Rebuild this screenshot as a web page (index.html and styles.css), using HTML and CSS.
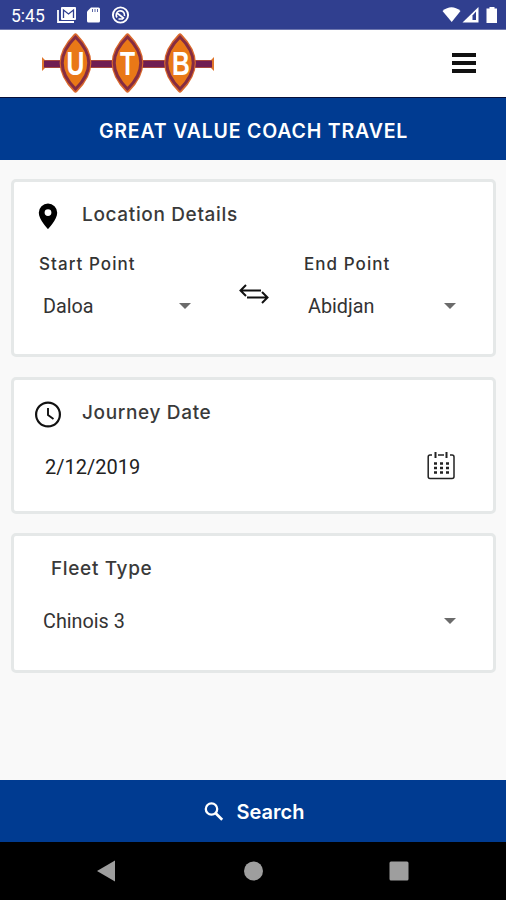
FILE: index.html
```html
<!DOCTYPE html>
<html lang="en">
<head>
    <meta charset="UTF-8">
    <meta name="viewport" content="width=device-width, initial-scale=1.0">
    <title>UTB - Great Value Coach Travel</title>
    <link rel="stylesheet" href="styles.css">
</head>
<body>
    <div class="screen">
        <div class="status-bar">
            <span class="time">5:45</span>
            <svg class="status-left" width="74" height="18" viewBox="0 0 74 18">
                <path d="M1 4v12h16" fill="none" stroke="#fff" stroke-width="1.8"/>
                <rect x="4" y="1" width="15" height="13" rx="1" fill="#fff"/>
                <path d="M6.500 12V4l5 4 5-4v8" fill="none" stroke="#303f8f" stroke-width="1.3"/>
                <path d="M34 1.500h7.500q1.500 0 1.500 1.500v12q0 1.500-1.500 1.500h-10q-1.500 0-1.500-1.500V5.500z" fill="#fff"/>
                <path d="M35.500 3v3M38 3v3M40.500 3v3" stroke="#303f8f" stroke-width="0.8"/>
                <circle cx="63.500" cy="9" r="7.600" fill="none" stroke="#fff" stroke-width="1.900"/>
                <path d="M60 11.500a4.300 4.300 0 0 1 2-6.500 4.300 4.300 0 0 1 5.500 5M60 7l7 5.500M61.500 13h4.500" fill="none" stroke="#fff" stroke-width="1.700"/>
            </svg>
            <svg class="status-right" width="56" height="18" viewBox="0 0 56 18">
                <path d="M0.500 5Q9.500-2.500 18.500 5L9.700 16z" fill="#fff"/>
                <path d="M20.500 16.500L36.500 1v15.500z" fill="#fff"/>
                <path d="M30.500 14V9.500l3.500-4V14z" fill="#303f8f"/>
                <path d="M45.500 2.500h2V1h5v1.500h2.500V17H44.500V2.500z" fill="#fff"/>
            </svg>
        </div>

        <div class="header">
            <svg class="logo" width="174" height="62" viewBox="0 0 174 62">
                <path d="M1 25l3 3h166l3-3v14l-3-3H4l-3 3z" fill="#e0752a"/>
                <path d="M3 28.500h168v7H3z" fill="#701d52"/>
                <g fill="#e97817" stroke="#d9682c" stroke-width="5" stroke-linejoin="round">
                    <path d="M34.500 4Q8 31 34.500 58Q61 31 34.500 4z"/>
                    <path d="M86.500 4Q60 31 86.500 58Q113 31 86.500 4z"/>
                    <path d="M139 4Q112.500 31 139 58Q165.500 31 139 4z"/>
                </g>
                <g fill="#e97817" stroke="#852c42" stroke-width="3">
                    <path d="M34.500 5Q8 31 34.500 57Q61 31 34.500 5z"/>
                    <path d="M86.500 5Q60 31 86.500 57Q113 31 86.500 5z"/>
                    <path d="M139 5Q112.500 31 139 57Q165.500 31 139 5z"/>
                </g>
                <g class="logo-text">
                    <text x="34.500" y="43">U</text>
                    <text x="86.500" y="43">T</text>
                    <text x="140" y="43">B</text>
                </g>
            </svg>
            <div class="menu">
                <span></span>
                <span></span>
                <span></span>
            </div>
        </div>

        <div class="title">GREAT VALUE COACH TRAVEL</div>

        <div class="content">
            <div class="card card-location">
                <div class="card-head">
                    <svg width="28" height="28" viewBox="0 0 28 28">
                        <path fill-rule="evenodd" d="M14 2.500a9.200 9.200 0 0 0-9.200 9.200C4.800 18.500 14 28 14 28s9.200-9.500 9.200-16.300A9.200 9.200 0 0 0 14 2.500zm0 5.700a3.400 3.400 0 1 1 0 6.800 3.400 3.400 0 0 1 0-6.800z"/>
                    </svg>
                    <h2>Location Details</h2>
                </div>
                <div class="points">
                    <div class="point">
                        <div class="label">Start Point</div>
                        <div class="select"><span>Daloa</span><i class="caret"></i></div>
                    </div>
                    <svg class="swap" width="30" height="20" viewBox="0 0 30 20" fill="none" stroke="#111" stroke-width="2">
                        <path d="M7 1L1.500 6.500 7 12M2 6.500h20"/>
                        <path d="M23 8l5.500 5.500L23 19M28 13.500H8"/>
                    </svg>
                    <div class="point">
                        <div class="label">End Point</div>
                        <div class="select"><span>Abidjan</span><i class="caret"></i></div>
                    </div>
                </div>
            </div>

            <div class="card card-date">
                <div class="card-head">
                    <svg width="28" height="28" viewBox="0 0 28 28" fill="none" stroke="#111">
                        <circle cx="14" cy="14.500" r="11.900" stroke-width="2.200"/>
                        <path d="M14 8v7l5.500 4" stroke-width="1.900"/>
                    </svg>
                    <h2>Journey Date</h2>
                </div>
                <div class="date-row">
                    <span class="date">2/12/2019</span>
                    <svg width="28" height="29" viewBox="0 0 28 29" fill="none" stroke="#222">
                        <path d="M5 4H3Q1.200 4 1.200 6v19.500Q1.200 27.500 3 27.500h22q2 0 2-2V6q0-2-2-2h-2M11 4h6" stroke-width="1.500"/>
                        <path d="M8.500 1v6M19.500 1v6" stroke-width="2"/>
                        <path d="M7 12.500h15M7 17h15M7 21.500h15" stroke-width="2.400" stroke-dasharray="3 3"/>
                    </svg>
                </div>
            </div>

            <div class="card card-fleet">
                <h2>Fleet Type</h2>
                <div class="select"><span>Chinois 3</span><i class="caret"></i></div>
            </div>
        </div>

        <div class="search">
            <svg width="20" height="20" viewBox="0 0 20 20" fill="none" stroke="#fff">
                <circle cx="7.500" cy="7" r="5.700" stroke-width="2.300"/>
                <path d="M11.700 11.200l6.500 6.500" stroke-width="2.700"/>
            </svg>
            <span>Search</span>
        </div>

        <div class="nav-bar">
            <svg width="20" height="22" viewBox="0 0 20 22"><path d="M0 11L18 0.500v21z"/></svg>
            <svg width="20" height="20" viewBox="0 0 20 20"><circle cx="10.500" cy="10" r="9.500"/></svg>
            <svg width="20" height="20" viewBox="0 0 20 20"><rect x="0.500" y="0.500" width="19" height="19" rx="1.500"/></svg>
        </div>
    </div>
</body>
</html>
```
FILE: styles.css
```css
* {
    box-sizing: border-box;
}
body {
    margin: 0;
    font-family: Inter, "Liberation Sans", sans-serif;
    color: #333;
}
.screen {
    display: flex;
    flex-direction: column;
    width: 506px;
    height: 900px;
    background-color: #f9f9f9;
}
svg {
    display: block;
    flex-shrink: 0;
}
.status-bar {
    display: flex;
    align-items: center;
    height: 30px;
    padding: 0 8px 0 11px;
    background-color: #303f8f;
    border-bottom: 1px solid #6e77ae;
}
.time {
    width: 46px;
    padding-top: 2px;
    font-family: Roboto, sans-serif;
    font-size: 17.5px;
    color: #fff;
}
.status-right {
    margin-left: auto;
}
.header {
    display: flex;
    align-items: center;
    justify-content: space-between;
    height: 68px;
    padding: 0 30px 1px 41px;
    background-color: #fff;
    border-bottom: 1px solid #07103a;
}
.logo-text {
    font-family: "Liberation Sans", sans-serif;
    font-size: 33px;
    font-weight: bold;
    fill: #fff;
    text-anchor: middle;
}
.logo-text text {
    transform-box: fill-box;
    transform-origin: center;
    transform: scaleX(0.75);
}
.menu {
    display: flex;
    flex-direction: column;
    gap: 4px;
    width: 24px;
}
.menu span {
    height: 4px;
    background-color: #111;
}
.title {
    height: 62px;
    line-height: 66px;
    padding-left: 1px;
    text-align: center;
    font-size: 19.5px;
    font-weight: 600;
    letter-spacing: 0.82px;
    color: #fff;
    background-color: #003b91;
}
.content {
    flex: 1;
    padding: 19px 10px 0 11px;
}
.card {
    background-color: #fff;
    border: 3px solid #e5e8e8;
    border-radius: 5px;
    margin-bottom: 20px;
}
.card-location {
    height: 178px;
    padding: 18px 24px 0 20px;
}
.card-date {
    height: 137px;
    padding: 19px 24px 0 20px;
    margin-bottom: 19px;
}
.card-fleet {
    height: 140px;
    padding: 20px 24px 0 25px;
}
.card-head {
    display: flex;
    gap: 20px;
    height: 30px;
    align-items: center;
}
h2 {
    margin: 0;
    padding-bottom: 2px;
    font-size: 19px;
    line-height: 26px;
    font-weight: 500;
    letter-spacing: 0.65px;
    color: #3a3a3a;
}
.card-location h2 {
    padding-bottom: 0;
}
.points {
    display: flex;
    justify-content: space-between;
    padding: 22px 0 0 5px;
}
.point {
    width: 165px;
}
.label {
    font-size: 17px;
    line-height: 24px;
    font-weight: 500;
    letter-spacing: 1.05px;
}
.select {
    display: flex;
    align-items: center;
    justify-content: space-between;
    height: 24px;
    padding: 0 13px 0 4px;
    font-family: Roboto, sans-serif;
    font-size: 19.8px;
}
.point .select {
    margin-top: 18px;
}
.caret {
    width: 0;
    border: 6px solid transparent;
    border-top-color: #6b6b6b;
    border-bottom: 0;
}
.swap {
    margin-top: 32px;
}
.date-row {
    display: flex;
    align-items: center;
    justify-content: space-between;
    padding: 22px 14px 0 11px;
}
.date {
    padding-top: 2px;
    font-family: Roboto, sans-serif;
    font-size: 20px;
    color: #222;
}
.card-fleet h2 {
    padding-left: 12px;
}
.card-fleet .select {
    margin-top: 25px;
}
.search {
    display: flex;
    align-items: center;
    justify-content: center;
    gap: 13px;
    height: 62px;
    padding: 2px 0 0 2px;
    font-size: 20px;
    font-weight: 600;
    color: #fff;
    background-color: #003b91;
}
.nav-bar {
    display: flex;
    align-items: center;
    justify-content: space-between;
    height: 58px;
    padding: 0 97px;
    background-color: #000;
}
.nav-bar svg {
    fill: #9e9e9e;
}
```
